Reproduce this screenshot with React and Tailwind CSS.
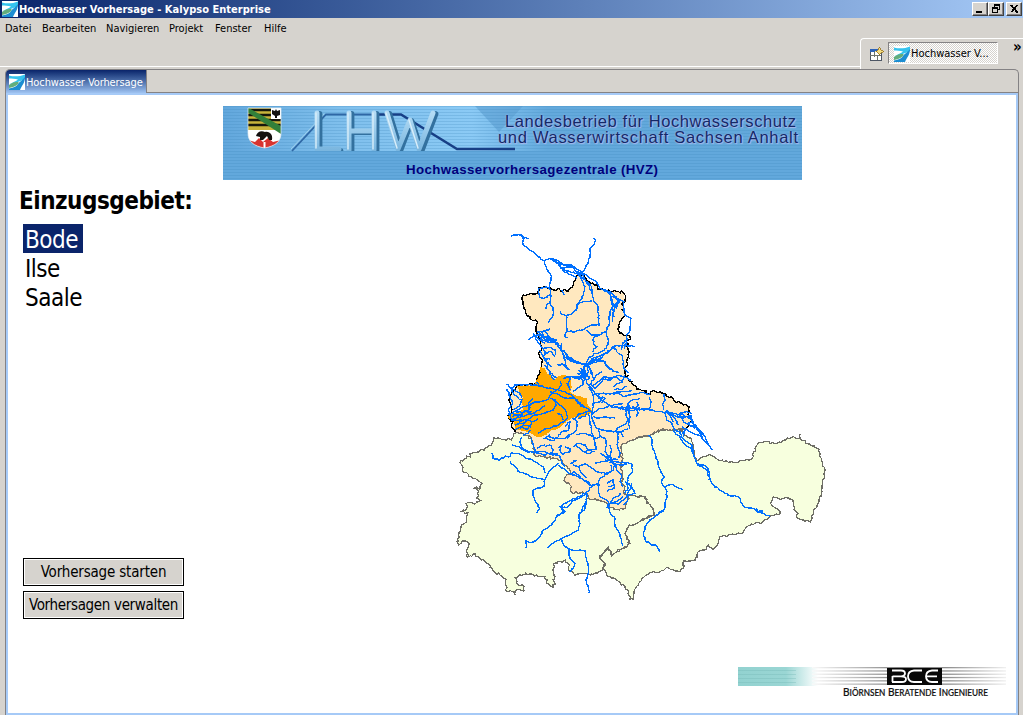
import React from "react";

/* Turns "x,y x,y" into a slightly ragged path, the way digitised borders and streams look. */
function ragged(points, amount, close) {
  const p = points.trim().split(/\s+/).map((s) => s.split(",").map(Number));
  if (close) p.push(p[0]);
  let seed = 7 + p.length * 13;
  const rnd = () => {
    seed = (seed * 1103515245 + 12345) % 2147483648;
    return seed / 2147483648 - 0.5;
  };
  let d = `M${p[0][0]} ${p[0][1]}`;
  for (let i = 1; i < p.length; i++) {
    const [ax, ay] = p[i - 1];
    const [bx, by] = p[i];
    const n = Math.max(1, Math.round(Math.hypot(bx - ax, by - ay) / 6));
    for (let k = 1; k < n; k++) {
      const t = k / n;
      d += `L${(ax + (bx - ax) * t + rnd() * amount).toFixed(1)} ${(ay + (by - ay) * t + rnd() * amount).toFixed(1)}`;
    }
    d += `L${bx} ${by}`;
  }
  return close ? d + "Z" : d;
}

const THURINGIA =
  "240,25 232,10 205,5 190,12 185,30 150,25 130,22 125,42 105,55 85,65 65,70 50,85 32,92 35,105 38,125 55,133 75,145 95,158 90,175 72,174 85,184 80,205 92,212 75,222 52,218 50,235 36,243 54,248 50,270 35,285 30,305 28,322 18,335 25,345 45,333 58,342 50,360 52,382 75,372 90,385 115,400 130,425 150,435 168,448 170,485 185,485 195,495 198,480 212,480 222,482 222,470 200,460 195,442 210,435 240,432 265,440 285,440 290,460 310,472 315,440 310,405 330,395 345,390 355,400 355,420 375,436 400,430 425,432 445,425 460,418 465,400 450,385 460,370 475,352 485,378 500,365 520,355 540,340 535,330 525,310 535,290 560,280 585,265 615,257 610,235 595,220 585,200 555,198 530,190 500,100 300,50";
const SAXONY =
  "-50,598 -40,615 -10,630 15,650 25,665 30,688 40,688 42,665 55,645 75,618 90,608 120,605 140,592 160,600 180,605 190,595 190,572 225,572 235,545 255,540 265,525 280,538 295,520 300,500 330,495 350,492 370,488 380,470 395,462 420,460 450,440 480,432 475,418 460,410 452,400 460,380 480,388 500,382 520,392 522,420 535,430 530,442 550,450 572,456 580,425 595,400 605,360 615,300 600,260 598,238 570,222 550,212 541,205 541,192 540,205 515,202 495,210 465,222 440,215 415,217 405,235 400,260 390,270 340,277 300,272 285,262 265,255 240,265 230,272 220,240 215,210 190,190 175,178 160,182 135,178 110,185 90,198 55,203 30,210 5,222 5,370 45,378 75,380 85,400 100,415 105,437 75,445 50,460 25,470 15,490 25,510 30,520 10,535 -10,545 -25,558 -35,532 -50,550 -60,565 -45,580";
const ANHALT_N =
  "218,210 262,205 265,190 300,188 330,195 355,198 370,180 375,155 395,148 410,165 440,180 450,192 480,200 495,198 520,203 527,230 518,235 522,275 510,290 507,320 520,330 540,335 530,350 535,375 530,410 525,440 545,475 570,493 600,507 610,497 640,505 670,523 700,540 720,543 715,565 725,590 705,615";
const ANHALT_S =
  "705,615 690,610 665,617 650,613 625,615 600,630 565,637 540,647 515,660 512,685 520,700 510,720 518,740 515,775 525,785 522,805 535,815 530,835 520,853 505,853 475,843 470,833 445,825 415,820 410,805 382,803 365,803 360,780 342,767 350,750 362,740 345,720 335,705 315,700 280,695 255,693 250,665 240,635 195,620";
const ANHALT_W =
  "195,620 185,605 190,590 175,580 180,570 185,540 175,525 185,505 200,483 255,477 275,430 278,405 265,385 275,375 270,355 265,335 258,310 262,290 240,280 222,250 218,210";
const BODE =
  "150,50 165,55 170,70 185,80 190,95 205,78 225,75 240,82 245,110 240,125 265,138 292,145 295,165 310,180 300,192 270,200 245,205 225,220 205,235 180,245 165,255 145,262 130,255 115,245 90,240 75,235 72,215 55,205 60,190 80,190 100,180 95,160 98,140 88,125 80,108 135,105 138,92 150,75";

const NORTH_STREAMS = [
  "183,33 200,30 215,30 220,45 218,55 235,70 260,90 283,108 288,125 295,140 305,155 298,185 302,205 300,230 308,245 310,265 305,280 295,292",
  "215,30 222,40 238,40",
  "430,38 437,45 432,60 420,70 420,90 415,110 405,130 398,140",
  "283,108 300,100 320,105 340,118 365,120 385,135 400,145 420,160 440,170 450,190 480,200 500,220 510,230",
  "300,100 325,115 335,130 350,138 375,145 400,150", "335,130 365,125 380,140 398,150", "310,108 345,122 380,130", "325,118 340,138 365,150 380,160",
  "380,140 395,165 405,185 400,210 385,235 378,255 365,268 350,272 335,268 330,260",
  "385,150 405,165 425,185 430,225 442,240 445,265 447,300 430,300 415,305 405,312 375,320 350,320 345,335 355,338",
  "350,272 350,300 350,320", "378,240 400,230 425,228", "398,150 415,180 425,200",
  "265,190 268,215 280,220 300,208", "300,188 285,187 265,192", "303,232 290,240 288,252", "335,195 342,210",
  "450,190 470,200 485,215 490,240 480,265 478,295 468,320 445,330 430,340 430,355 440,365 425,380",
  "480,200 485,235 490,260 488,290", "485,215 505,225 495,240 490,265 493,275", "490,235 500,250 505,225", "510,230 500,240 488,245",
  "500,222 522,230 520,245 525,270 543,280 540,315 530,330 530,360 490,365 470,385 455,392 430,400 410,420 400,425",
  "530,362 555,364", "470,320 475,350 470,370 455,380 435,385 415,400 410,418", "410,315 425,330 445,330",
  "490,365 500,380 515,390 520,410 522,430 535,445", "530,345 522,370", "525,345 518,360 515,375",
  "235,345 250,335 265,330 275,345 290,350 315,353 330,370 340,390 350,400 370,412 400,417 415,418 440,398 465,385",
  "262,320 275,335 300,340 325,355 340,380", "280,315 290,325 305,345", "300,312 285,320 265,320", "270,325 290,340 310,350", "250,330 270,345 285,355", "275,320 285,345 315,350", "268,338 290,335 320,345",
  "250,325 265,355 280,370 285,385 280,400 290,410 295,435 310,455 320,460",
  "280,370 300,367 315,375 316,390", "283,400 300,403", "340,390 345,405 350,425 358,435", "322,418 345,418", "335,355 330,370",
  "405,418 400,430 405,445 395,460 400,480", "410,420 415,440 408,455", "395,440 415,450", "385,435 400,445 385,460 352,455", "415,425 425,440 432,465", "390,430 405,440 418,460",
  "415,418 445,408 465,410 470,425 490,440 507,442", "465,385 490,370 500,360", "430,480 455,462 480,465 500,452 520,455 543,465",
  "420,480 440,450 455,440", "340,460 365,455 390,455",
];
const CENTRAL_STREAMS = [
  "50,102 65,115 75,105 105,103 135,105 150,108 175,115 205,120 225,125 245,135 265,155 280,170 300,180",
  "165,45 175,60 185,80 195,90", "210,95 215,105 205,118", "240,85 235,105 240,120", "230,100 238,112",
  "50,118 60,140 68,160 55,180 60,190 75,195", "58,108 70,130 85,145 95,150 90,165 70,180", "65,115 90,130 95,145",
  "55,192 75,185 95,188 115,180 120,165 135,155 155,155 175,148 185,130 200,122",
  "75,185 100,170 125,160 150,155", "120,175 115,160 130,145",
  "70,205 95,200 110,195 130,190 150,178 165,165",
  "60,195 65,210 85,212 110,210 125,200 135,195 160,190 190,180 200,165 190,150",
  "75,225 100,220 115,210 130,215 145,205", "90,235 100,225 120,230 125,215",
  "80,205 90,195 105,185 125,185", "65,200 80,195 100,195", "80,225 95,210", "75,240 95,230 110,238 120,225",
  "145,250 160,240 180,235 205,225 222,215 232,205 230,190 220,175 205,160 195,150 180,145", "200,190 215,195 220,210",
  "180,125 200,130 215,140 235,145 255,145 262,155 275,172", "140,95 145,105", "300,182 280,190 265,192 255,205", "245,205 262,215 260,240 240,255 230,265",
  "285,50 285,75 290,100 305,115 320,135 335,150 350,160 370,172 400,172 415,175 450,178 480,180 515,185 540,190",
  "275,60 285,85 280,100 262,115 250,125", "290,40 300,55 305,75", "255,80 270,85 280,75", "260,70 290,70", "265,90 275,80 285,90", "290,90 300,80",
  "310,135 335,130 360,132 385,130 400,140 420,135 450,128 480,132", "295,110 305,125 310,145 310,170 305,195 310,215 320,235 345,242 375,245 390,230 410,220 415,205",
  "300,100 315,115 335,95 340,80 360,85 375,80 395,92 405,75", "370,110 385,100 400,95", "372,118 395,118 410,108", "370,128 400,125 425,122", "340,140 330,155 310,160", "325,140 345,145 335,160",
  "410,175 415,160 430,148 450,145", "408,172 410,200 415,220 420,235", "415,178 420,200 418,220", "440,180 445,190 440,200", "435,175 445,165 440,155", "425,170 440,178 450,172", "385,175 410,180 435,182",
  "478,140 483,155 482,170 465,178", "522,132 525,150 518,165 520,180", "415,160 415,190", "470,175 450,180 430,170",
  "525,185 530,210 545,220 555,240 570,245 575,260 590,275 605,285 610,300 610,318",
  "525,185 550,190 580,195 605,210 610,225 630,240 645,260 658,290", "540,190 560,200 590,200 605,205", "535,185 555,205 565,225", "560,195 590,185 605,190", "570,195 580,215 600,225 615,235", "605,225 625,235 640,262", "530,180 545,205 550,215", "560,200 575,205 605,195",
  "615,325 620,340 640,345 655,355 658,370 657,390", "575,250 585,240 580,260", "600,195 610,215 595,220",
  "415,235 395,245 375,245", "310,200 325,205 345,200 375,205", "300,180 310,190 330,175 345,172", "345,172 370,165 400,160",
  "265,205 285,200 290,190", "295,190 300,215 305,240 310,260 315,285 320,300", "325,235 328,255 345,265 350,285 345,305 355,320",
  "260,255 280,250 300,255 320,265 330,260", "250,290 265,280 285,285 295,300 315,298", "255,285 275,300 290,310 315,305", "280,305 320,295", "315,340 340,335 360,328 385,330", "345,320 360,330 375,345 370,360 345,370 320,365 300,350",
  "350,322 365,325 360,340", "345,330 375,335 400,338", "355,325 370,340 395,345 410,342", "395,335 425,340 428,365 415,380 410,400 415,415 405,430",
  "330,310 345,320 360,318", "360,285 365,300 360,320", "380,245 385,265 382,290 390,310 388,325", "375,345 380,360 395,375 390,395 400,410", "362,345 365,365 345,375 328,385 325,400",
  "325,400 325,420 330,440 350,450 360,465", "325,400 305,410 290,425 285,435", "300,400 285,395 265,375 250,365 240,375", "350,400 370,390 372,415 350,425", "355,410 375,405", "390,430 385,440 370,445 355,465 350,475", "350,465 380,455 400,440", "360,460 385,462 405,445 420,420 425,400", "405,395 425,410 435,430 415,435 410,455 400,465",
  "205,345 220,355 235,368 250,375 275,385 300,405 325,405", "250,345 265,350 285,340 300,350", "265,350 275,370 290,385", "240,340 260,330",
  "125,265 130,285 135,305 160,315 185,310 210,320 215,335 225,350", "135,305 165,305 190,315 205,312", "165,290 180,285 190,300 180,310", "175,260 195,265 220,265 240,255", "180,255 165,265 180,270 195,270", "205,295 215,285 210,300 220,315", "165,285 150,290 140,295", "220,310 240,305 240,295 225,290", "225,230 240,215 235,240 215,245 205,260",
  "95,260 90,275 95,290 105,300 120,305", "100,255 115,250 120,240", "65,285 85,290 105,302 135,310",
  "5,310 10,320 8,325 30,330 45,318 60,320 65,308 90,312 110,325 130,332 150,345 160,350 165,370",
  "60,335 75,350 85,365 110,372 130,382 165,388 172,375 185,355 200,345 205,340", "165,388 162,410 140,415 128,422 130,440 140,460 148,475 140,490",
  "290,430 265,445 245,455 235,470 215,475 220,485 200,500", "290,430 290,455 285,475 270,490 268,508",
  "475,255 485,265 485,285 495,310 505,345 515,370 522,380 515,395 522,410 530,420 530,445 525,470 520,485 510,488 490,505",
  "525,410 540,405 550,403 560,412 580,418", "380,245 395,250 400,260",
  "150,0 155,12 165,30 185,50", "165,10 185,5 195,20", "205,45 220,45 235,60", "225,5 235,20 255,32 275,42 290,45 310,35 330,25 350,10", "220,0 235,25 265,42", "290,42 280,65 265,75", "315,30 340,32 355,50 370,62 385,65",
];
const SOUTH_STREAMS = [
  "410,188 385,200 355,215 330,230 345,245 320,260 305,285 280,300 265,325 245,338 228,332 228,355",
  "410,188 408,215 395,240 385,260 390,280 385,300 360,315 335,325 305,342 292,355",
  "330,325 345,350 365,360 405,362 410,390 415,425 408,450 415,470 417,490", "355,358 360,385 375,400 370,415 357,425",
  "475,225 478,245 495,265 495,290 510,315 518,348",
];
const EAST_STREAMS = [
  "160,182 180,200 190,220 215,240 225,265 230,280 260,300 268,325 280,345 300,362 330,377 355,380 370,410 400,415 415,427 450,438",
  "408,415 415,425 430,422", "128,420 105,440 90,450 75,470 70,490 75,510 90,522 110,528 118,547", "215,155 225,165 240,190 250,210 265,225 278,240", "185,170 210,185 235,195 250,205",
];

function Streams({ list, at }) {
  return (
    <g transform={at}>
      {list.map((s, i) => (
        <path key={i} d={ragged(s, 4, false)} />
      ))}
    </g>
  );
}

function CatchmentMap() {
  return (
    <svg className="block h-[380px] w-[380px]" viewBox="450 225 380 380" fill="none" shapeRendering="crispEdges">
      <g strokeWidth="3.8" stroke="#6e6e66" fill="#f7ffde">
        <path transform="translate(450 430) scale(.33333)" d={ragged(THURINGIA, 8, true)} />
        <path transform="translate(620 370) scale(.33333)" d={ragged(SAXONY, 6, true)} />
      </g>
      <g transform="translate(450 225) scale(.33333)" strokeWidth="4">
        <path d={ragged(`${ANHALT_N} ${ANHALT_S} ${ANHALT_W}`, 3, true)} fill="#ffe8bf" />
        <path d={ragged(ANHALT_N, 9, false)} stroke="#000" />
        <path d={ragged(ANHALT_S, 7, false)} stroke="#77736a" />
        <path d={ragged(ANHALT_W, 7, false)} stroke="#000" />
      </g>
      <path transform="translate(490 350) scale(.33333)" d={ragged(BODE, 6, true)} fill="#ffa800" />
      <g stroke="#0070ff" strokeWidth="4.2">
        <Streams list={NORTH_STREAMS} at="translate(450 225) scale(.33333)" />
        <Streams list={CENTRAL_STREAMS} at="translate(490 350) scale(.33333)" />
        <Streams list={SOUTH_STREAMS} at="translate(450 430) scale(.33333)" />
        <Streams list={EAST_STREAMS} at="translate(620 370) scale(.33333)" />
      </g>
    </svg>
  );
}

function RiverIcon() {
  return (
    <svg className="block h-4 w-4 shrink-0" viewBox="0 0 16 16">
      <rect width="16" height="16" fill="#fff" />
      <path d="M0 1.500C5 3 11 2.500 16 .5V5C12 7 6 9 0 10.500C4 8.500 7 7 9 5.500C6 4.500 3 4.500 0 4.500Z" fill="#35c3ee" />
      <path d="M16 3C16 9 13 11 11 16H0V14.500C5 13.500 8 12 9 10C10 8 14 6 16 3Z" fill="#1d8ed2" />
      <path d="M0 11C3 8.500 6 8 9.500 8C10 10.500 6 13 0 14Z" fill="#62ad7c" />
    </svg>
  );
}

function Banner() {
  return (
    <svg className="block h-[74px] w-[579px]" viewBox="0 0 579 74">
      <defs>
        <linearGradient id="sky" x1="0" x2="1">
          <stop offset="0" stopColor="#62a7dc" />
          <stop offset=".2" stopColor="#7fbfec" />
          <stop offset=".43" stopColor="#8bcaf5" />
          <stop offset=".56" stopColor="#63a9dc" />
          <stop offset="1" stopColor="#62a8da" />
        </linearGradient>
        <linearGradient id="tube" x1="0" x2="0" y1="0" y2="1">
          <stop offset="0" stopColor="#b4dcf5" />
          <stop offset="1" stopColor="#7ab6df" />
        </linearGradient>
        <pattern id="scan" width="4" height="3" patternUnits="userSpaceOnUse">
          <rect width="4" height="1" fill="#3e86bc" opacity=".25" />
        </pattern>
        <clipPath id="shield">
          <path d="M25 2H58V27C58 36 52 40 41.500 42C31 40 25 36 25 27Z" />
        </clipPath>
        <clipPath id="letters"><rect width="579" height="45" /></clipPath>
      </defs>
      <rect width="579" height="74" fill="#62a8dc" />
      <rect width="579" height="45" fill="url(#sky)" />
      <path d="M252 0H300L276 26Z" fill="#5c9fd2" opacity=".6" />
      <rect width="579" height="74" fill="url(#scan)" />
      <g clipPath="url(#shield)">
        <rect x="25" width="33" height="43" fill="#fff" />
        <rect x="25" y="2" width="33" height="22" fill="#c9b43b" />
        <path d="M25 4H58M25 9H58M25 14H58M25 19H58" stroke="#17180d" strokeWidth="2.600" />
        <path d="M24 1L58 20V28L24 6Z" fill="#32803a" />
        <rect x="48" y="2" width="10" height="11" fill="#fff" />
        <path d="M49 4L52 5L53 3L54 5L57 4V9L54 10V12H52V10L49 8Z" fill="#111" />
        <path d="M25 34L32 36L36 32L40 36L45 32L50 36L58 34V43H25Z" fill="#d8342f" />
        <path d="M33 30C34 26 38 24 42 26C47 25 50 29 49 34H46L44 30L40 34H37V31Z" fill="#14100f" />
        <path d="M41.500 36V43" stroke="#fff" strokeWidth="2" />
      </g>
      <path d="M25 2H58V27C58 36 52 40 41.500 42C31 40 25 36 25 27Z" fill="none" stroke="#e7edf0" strokeWidth=".7" />
      <path d="M69 45L103 8.500H150" fill="none" stroke="#2f68a6" strokeWidth="1.800" />
      <path d="M150 8.500H178L234 43H292" fill="none" stroke="#173f86" strokeWidth="2.400" />
      <path d="M68 43L101 8" fill="none" stroke="#9ed0ee" strokeWidth="1" />
      <g clipPath="url(#letters)" fill="none" strokeLinejoin="round" strokeLinecap="round">
        <path d="M95 7V44H116M127 7V44M127 25H151M152 7V44M165 7L176 43L187 14L197 44L211 7" transform="translate(1.500 1)" stroke="#33719f" strokeWidth="5.800" />
        <path d="M94 7V43H116M126 7V44M126 25H151M151 7V44M164 7L175 43L187 14L196 43L210 7" stroke="url(#tube)" strokeWidth="5" />
        <path d="M93 7V42M125 7V43M150 7V43M163 7L174 42M186 14L195 42" stroke="#d9eefa" strokeWidth="1.400" />
      </g>
      <g fontFamily="'Liberation Sans', Arial, sans-serif" fontSize="16.500" fill="#132968" className="[text-shadow:0_0_2px_#a9b9ee,1px_1px_1px_#a9b9ee] [-webkit-text-stroke:0.4px_#132968]">
        <text x="282" y="21" textLength="291">Landesbetrieb für Hochwasserschutz</text>
        <text x="275" y="36.500" textLength="300">und Wasserwirtschaft Sachsen Anhalt</text>
      </g>
      <text x="183" y="68" fontFamily="'Liberation Sans', Arial, sans-serif" fontWeight="700" fontSize="13.300" textLength="252" fill="#00007c">Hochwasservorhersagezentrale (HVZ)</text>
    </svg>
  );
}

function BceLogo() {
  return (
    <svg className="block h-[36px] w-[270px]" viewBox="738 665 270 36">
      <defs>
        <linearGradient id="teal" x1="738" x2="818" y1="0" y2="0" gradientUnits="userSpaceOnUse">
          <stop offset="0" stopColor="#92d2d0" />
          <stop offset=".6" stopColor="#9ad6d4" />
          <stop offset="1" stopColor="#fff" />
        </linearGradient>
        <linearGradient id="grey" x1="808" x2="1006" y1="0" y2="0" gradientUnits="userSpaceOnUse">
          <stop offset="0" stopColor="#fff" />
          <stop offset=".45" stopColor="#858585" />
          <stop offset=".7" stopColor="#8d8d8d" />
          <stop offset="1" stopColor="#f0f0f0" />
        </linearGradient>
      </defs>
      <rect x="738" y="667" width="80" height="19" fill="url(#teal)" />
      <path d="M738 670.500H796M738 674.500H796M738 678.500H796M738 682.500H796" stroke="#74b7b5" opacity=".35" />
      <g fill="url(#grey)">
        {[667, 670.3, 673.6, 676.9, 680.2, 683.5].map((y) => (
          <rect key={y} x="812" y={y} width="194" height="1.300" />
        ))}
      </g>
      <rect x="887" y="668" width="55" height="17" fill="#080808" />
      <path d="M892 670.500H901Q905 670.500 905 673.500Q905 676 901 676.300H892.500M901 676.300Q906 676.500 906 679Q906 682 902 682H892M892.500 676V682M922 670.500H914Q908 671 908 676.300Q908 682 914 682H922M938 670.500H932Q926 671 926 676.300Q926 682 932 682H938M926 676.300H937" fill="none" stroke="#fff" strokeWidth="1.800" />
      <text x="843" y="696" fontFamily="Lato, sans-serif" fontSize="10.500" fontWeight="500" textLength="145" lengthAdjust="spacingAndGlyphs" fill="#111" stroke="#111" strokeWidth=".2">
        B<tspan fontSize="8.500">IÖRNSEN</tspan> B<tspan fontSize="8.500">ERATENDE</tspan> I<tspan fontSize="8.500">NGENIEURE</tspan>
      </text>
    </svg>
  );
}

function CaptionButton({ children, className = "" }) {
  return (
    <button className={`h-[14px] w-4 border border-t-white border-l-white border-r-[#404040] border-b-[#404040] bg-[#d6d3ce] p-0 shadow-[inset_-1px_-1px_0_#848284] ${className}`}>
      <svg className="block h-3 w-[14px]" viewBox="0 0 14 12" fill="none" stroke="#000" shapeRendering="crispEdges">
        {children}
      </svg>
    </button>
  );
}

const MENU = [
  ["Datei", "w-[37px]"],
  ["Bearbeiten", "w-[64px]"],
  ["Navigieren", "w-[63px]"],
  ["Projekt", "w-[46px]"],
  ["Fenster", "w-[49px]"],
  ["Hilfe", "w-[30px]"],
];

export default function App() {
  return (
    <div className="flex h-[715px] w-[1023px] flex-col overflow-hidden bg-[#d6d3ce] font-['DejaVu_Sans_Condensed','DejaVu_Sans',sans-serif] text-[11px] leading-none text-black [font-stretch:condensed]">
      <header className="flex h-[18px] shrink-0 items-center bg-linear-to-r from-[#0a246a] to-[#a6caf7] pr-px pl-[2px]">
        <RiverIcon />
        <h1 className="ml-px flex-1 text-[11px] font-bold tracking-[0.02px] whitespace-nowrap text-white">Hochwasser Vorhersage - Kalypso Enterprise</h1>
        <CaptionButton><path d="M3 8.500H9M3 9.500H9" /></CaptionButton>
        <CaptionButton><path d="M5 1.500H11M5 2.500H11M5.500 1V4M10.500 1V7M9 6.500H11M3 4.500H9M3 5.500H9M3.500 4V10M8.500 4V10M3 9.500H9" /></CaptionButton>
        <CaptionButton className="ml-[2px]"><path d="M3.500 2L10 9.500M4.500 2L11 9.500M10 2L3.500 9.500M11 2L4.500 9.500" /></CaptionButton>
      </header>
      <nav className="flex h-5 shrink-0 items-center pl-[5px]">
        {MENU.map(([name, width]) => (
          <span key={name} className={`${width} shrink-0 whitespace-nowrap`}>{name}</span>
        ))}
      </nav>
      <div className="flex h-[31px] shrink-0">
        <div className="h-[29px] w-[860px] border-b border-white" />
        <div className="flex flex-1 items-start rounded-tl-[4px] border-t border-l border-white pt-[3px] pl-2">
          <svg className="mt-[5px] h-[15px] w-[15px]" viewBox="0 0 15 15" fill="none" shapeRendering="crispEdges">
            <path d="M1.500 3.500H12.500V13.500H1.500Z" fill="#fff" stroke="#4d5664" />
            <path d="M1 2H9V5H1Z" fill="#2b62b8" />
            <path d="M5.500 5V10M1 8.500H12M8.500 8V13" stroke="#6f746c" />
            <path d="M10.500 0L12 3L15 4.500L12 6L10.500 8L9 6L6.500 4.500L9 3Z" fill="#f3dc84" stroke="#96721c" strokeWidth=".8" />
          </svg>
          <div className="ml-[4px] flex h-[22px] w-[110px] items-center border border-t-[#848284] border-l-[#848284] border-r-white border-b-white bg-[repeating-conic-gradient(#fff_0_25%,#d6d3ce_0_50%)] bg-size-[2px_2px] pt-px pl-[5px]">
            <RiverIcon />
            <span className="ml-px whitespace-nowrap">Hochwasser V...</span>
          </div>
          <span className="-mt-[2px] ml-[15px] text-[15px] font-bold">»</span>
        </div>
      </div>
      <main className="mr-1 ml-[5px] flex flex-1 flex-col rounded-t-[5px] border border-b-0 border-[#848284]">
        <div className="flex h-[23px] shrink-0 border-b border-[#848284]">
          <div className="flex h-6 w-[141px] shrink-0 items-center rounded-tl-[4px] border-r border-[#848284] bg-linear-to-b from-[#0a246a] to-[#a6caf7] pl-[3px] text-white">
            <RiverIcon />
            <span className="ml-px tracking-[-0.1px] whitespace-nowrap">Hochwasser Vorhersage</span>
          </div>
        </div>
        <section className="flex flex-1 flex-col border-2 border-[#a6caf7] bg-white pt-[11px]">
          <div className="pl-[215px]"><Banner /></div>
          <div className="flex h-[485px] shrink-0">
            <div className="flex w-[442px] flex-col">
              <h2 className="mt-[9px] ml-[11px] text-[24px] leading-6 font-bold tracking-[-0.5px] whitespace-nowrap">Einzugsgebiet:</h2>
              <ul className="mt-[11px] ml-[15px] w-[60px] text-[24px] leading-[29px] tracking-[-0.5px]">
                <li className="h-[29px] bg-[#0a246a] pt-[2px] pl-[2px] text-white">Bode</li>
                <li className="h-[29px] pt-[2px] pl-[2px]">Ilse</li>
                <li className="h-[29px] pt-[2px] pl-[2px]">Saale</li>
              </ul>
              <div className="mt-[247px] ml-[15px] flex w-[161px] flex-col gap-[5px] text-[15px]">
                <button className="h-7 border border-black bg-[#d6d3ce] tracking-[-0.17px] whitespace-nowrap shadow-[inset_0_0_0_1px_#fff]">Vorhersage starten</button>
                <button className="h-7 border border-black bg-[#d6d3ce] tracking-[-0.33px] whitespace-nowrap shadow-[inset_0_0_0_1px_#fff]">Vorhersagen verwalten</button>
              </div>
            </div>
            <div className="pt-[45px]"><CatchmentMap /></div>
          </div>
          <div className="pl-[730px]"><BceLogo /></div>
        </section>
      </main>
    </div>
  );
}
